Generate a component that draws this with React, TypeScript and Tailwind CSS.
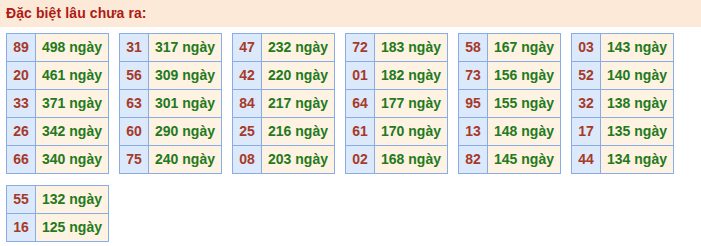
const groups: [string, number][][] = [
  [["89", 498], ["20", 461], ["33", 371], ["26", 342], ["66", 340]],
  [["31", 317], ["56", 309], ["63", 301], ["60", 290], ["75", 240]],
  [["47", 232], ["42", 220], ["84", 217], ["25", 216], ["08", 203]],
  [["72", 183], ["01", 182], ["64", 177], ["61", 170], ["02", 168]],
  [["58", 167], ["73", 156], ["95", 155], ["13", 148], ["82", 145]],
  [["03", 143], ["52", 140], ["32", 138], ["17", 135], ["44", 134]],
  [["55", 132], ["16", 125]],
];

const LotoTable = ({ rows }: { rows: [string, number][] }) => (
  <table className="w-[103px] border-collapse">
    <tbody>
      {rows.map(([num, days]) => (
        <tr key={num} className="h-[28px]">
          <td className="w-[29px] border border-[#88ade6] bg-[#dce9fa] p-0 text-center text-[14px] font-bold text-[#a63a2a]">
            {num}
          </td>
          <td className="border border-[#88ade6] bg-[#fef3e3] p-0 text-center text-[14px] font-bold text-[#23791c]">
            {days} ngày
          </td>
        </tr>
      ))}
    </tbody>
  </table>
);

export default function App() {
  return (
    <div className="w-[701px] bg-white font-['Liberation_Sans',Arial,sans-serif]">
      <div className="flex h-[27px] items-center bg-[#fce9d8] pl-[6px] text-[14px] font-bold tracking-[0.1px] text-[#b01a14]">
        Đặc biệt lâu chưa ra:
      </div>
      <div className="flex flex-wrap gap-x-[10px] gap-y-[11px] pl-[6px] pt-[6px]">
        {groups.map((rows, i) => (
          <LotoTable key={i} rows={rows} />
        ))}
      </div>
    </div>
  );
}
